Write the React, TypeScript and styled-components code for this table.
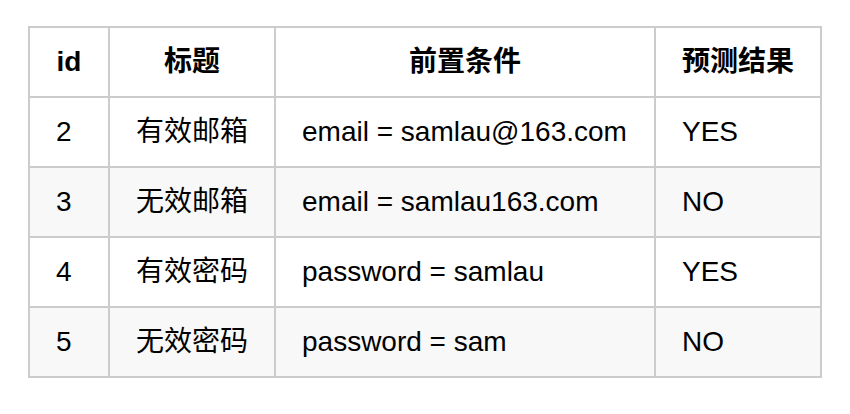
import React from "react";
import styled, { createGlobalStyle } from "styled-components";

const Global = createGlobalStyle`
  html, body { margin: 0; padding: 0; background: #ffffff; }
  body {
    font-family: "Liberation Sans", Arial, "Noto Sans CJK SC", sans-serif;
    color: #000;
  }
`;

const Page = styled.div`
  padding: 26px 0 0 28px;
`;

const Table = styled.table`
  border-collapse: collapse;
  table-layout: fixed;
  width: 794px;
  border: 2px solid #cccccc;
  font-size: 28px;
`;

const Row = styled.tr<{ $alt?: boolean }>`
  height: 70px;
  background: ${(p) => (p.$alt ? "#f8f8f8" : "#ffffff")};
`;

const Th = styled.th`
  border: 2px solid #cccccc;
  padding: 0 26px;
  font-weight: bold;
  text-align: center;
  line-height: 1.2;
`;

const Td = styled.td<{ $center?: boolean }>`
  border: 2px solid #cccccc;
  padding: 0 26px;
  text-align: ${(p) => (p.$center ? "center" : "left")};
  line-height: 1.2;
  white-space: nowrap;
`;

const rows = [
  { id: "2", title: "有效邮箱", cond: "email = samlau@163.com", result: "YES" },
  { id: "3", title: "无效邮箱", cond: "email = samlau163.com", result: "NO" },
  { id: "4", title: "有效密码", cond: "password = samlau", result: "YES" },
  { id: "5", title: "无效密码", cond: "password = sam", result: "NO" },
];

export default function App() {
  return (
    <>
      <Global />
      <Page>
        <Table>
          <colgroup>
            <col style={{ width: 80 }} />
            <col style={{ width: 166 }} />
            <col style={{ width: 380 }} />
            <col style={{ width: 166 }} />
          </colgroup>
          <thead>
            <Row>
              <Th>id</Th>
              <Th>标题</Th>
              <Th>前置条件</Th>
              <Th>预测结果</Th>
            </Row>
          </thead>
          <tbody>
            {rows.map((r, i) => (
              <Row key={r.id} $alt={i % 2 === 1}>
                <Td>{r.id}</Td>
                <Td $center>{r.title}</Td>
                <Td>{r.cond}</Td>
                <Td>{r.result}</Td>
              </Row>
            ))}
          </tbody>
        </Table>
      </Page>
    </>
  );
}
